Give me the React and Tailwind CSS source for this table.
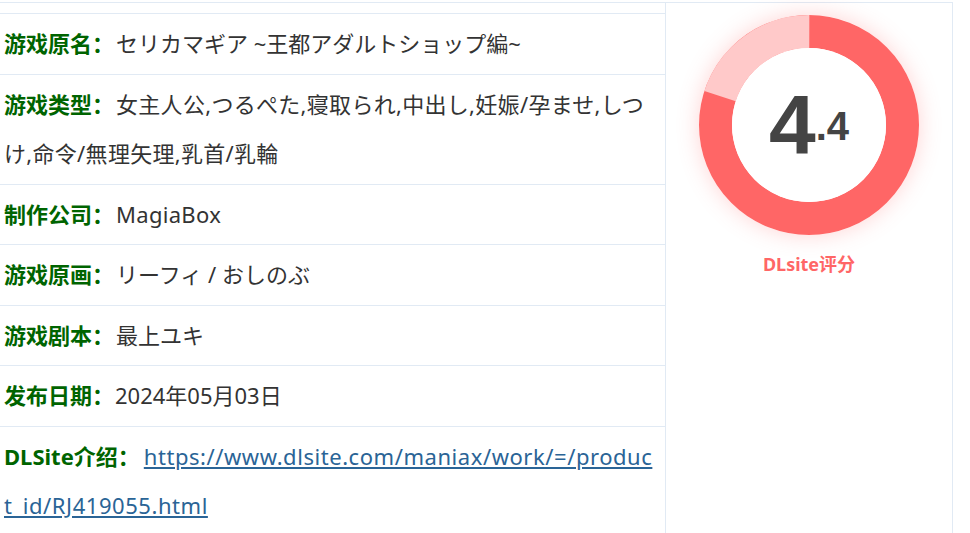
import React from 'react';

const FONT = '"Noto Sans", "Noto Sans CJK SC", sans-serif';

const ROWS = [
  { label: '游戏原名：', value: 'セリカマギア ~王都アダルトショップ編~', gap: 'ml-[2px]' },
  { label: '游戏类型：', value: '女主人公,つるぺた,寝取られ,中出し,妊娠/孕ませ,しつけ,命令/無理矢理,乳首/乳輪', gap: 'ml-[2px] tracking-[0.3px]' },
  { label: '制作公司：', value: 'MagiaBox', gap: 'ml-[2px] tracking-[0.3px]' },
  { label: '游戏原画：', value: 'リーフィ / おしのぶ', gap: 'ml-[2px]' },
  { label: '游戏剧本：', value: '最上ユキ', gap: 'ml-[2px]' },
  { label: '发布日期：', value: '2024年05月03日', gap: 'ml-[1px]' },
  {
    label: 'DLSite介绍：',
    link: 'https://www.dlsite.com/maniax/work/=/product_id/RJ419055.html',
  },
];

function InfoRow({ row }) {
  return (
    <div className="border-t border-[#e1eaf4] py-[5px] pl-1 pr-[9px] text-[22px] leading-[2.25] text-[#333]">
      <span className="font-bold text-[#006400]">{row.label}</span>
      {row.link ? (
        <a href={row.link} className="ml-[4px] break-all tracking-[0.55px] text-[#2a6496] underline">
          {row.link}
        </a>
      ) : (
        <span className={row.gap}>{row.value}</span>
      )}
    </div>
  );
}

function ScoreRing({ score = 4.4 }) {
  const r = 93.5;
  const c = 2 * Math.PI * r;
  const pink = c * 0.2;
  const [whole, frac] = String(score).split('.');
  return (
    <div className="relative h-[220px] w-[220px] rounded-full shadow-[0_0_22px_rgba(255,102,102,0.28)]">
      <svg width="220" height="220" viewBox="0 0 220 220">
        <circle cx="110" cy="110" r={r} fill="none" stroke="#ff6666" strokeWidth="33" />
        <circle
          cx="110"
          cy="110"
          r={r}
          fill="none"
          stroke="#ffc9c9"
          strokeWidth="33"
          strokeDasharray={`${pink} ${c}`}
          transform="rotate(-162 110 110)"
        />
        <circle cx="110" cy="110" r="77" fill="#fff" />
      </svg>
      <div
        className="absolute inset-0 flex items-baseline justify-center pt-[68px] font-bold text-[#444]"
        style={{ fontFamily: '"Liberation Sans", Arial, sans-serif' }}
      >
        <span className="text-[84px] leading-none">{whole}</span>
        <span className="-translate-y-[14px] text-[40px] leading-none">.{frac}</span>
      </div>
    </div>
  );
}

export default function App() {
  return (
    <div className="bg-white pt-[2px]" style={{ fontFamily: FONT }}>
      <div className="flex w-[953px] border-t border-r border-[#e1eaf4]">
        <div className="w-[665px]">
          <div className="h-[10px]" />
          {ROWS.map((row) => (
            <InfoRow key={row.label} row={row} />
          ))}
        </div>
        <div className="flex flex-1 flex-col items-center border-l border-[#e1eaf4] pt-[12px]">
          <ScoreRing score={4.4} />
          <div className="mt-[16px] text-[18px] font-bold text-[#ff6666]">DLsite评分</div>
        </div>
      </div>
    </div>
  );
}
